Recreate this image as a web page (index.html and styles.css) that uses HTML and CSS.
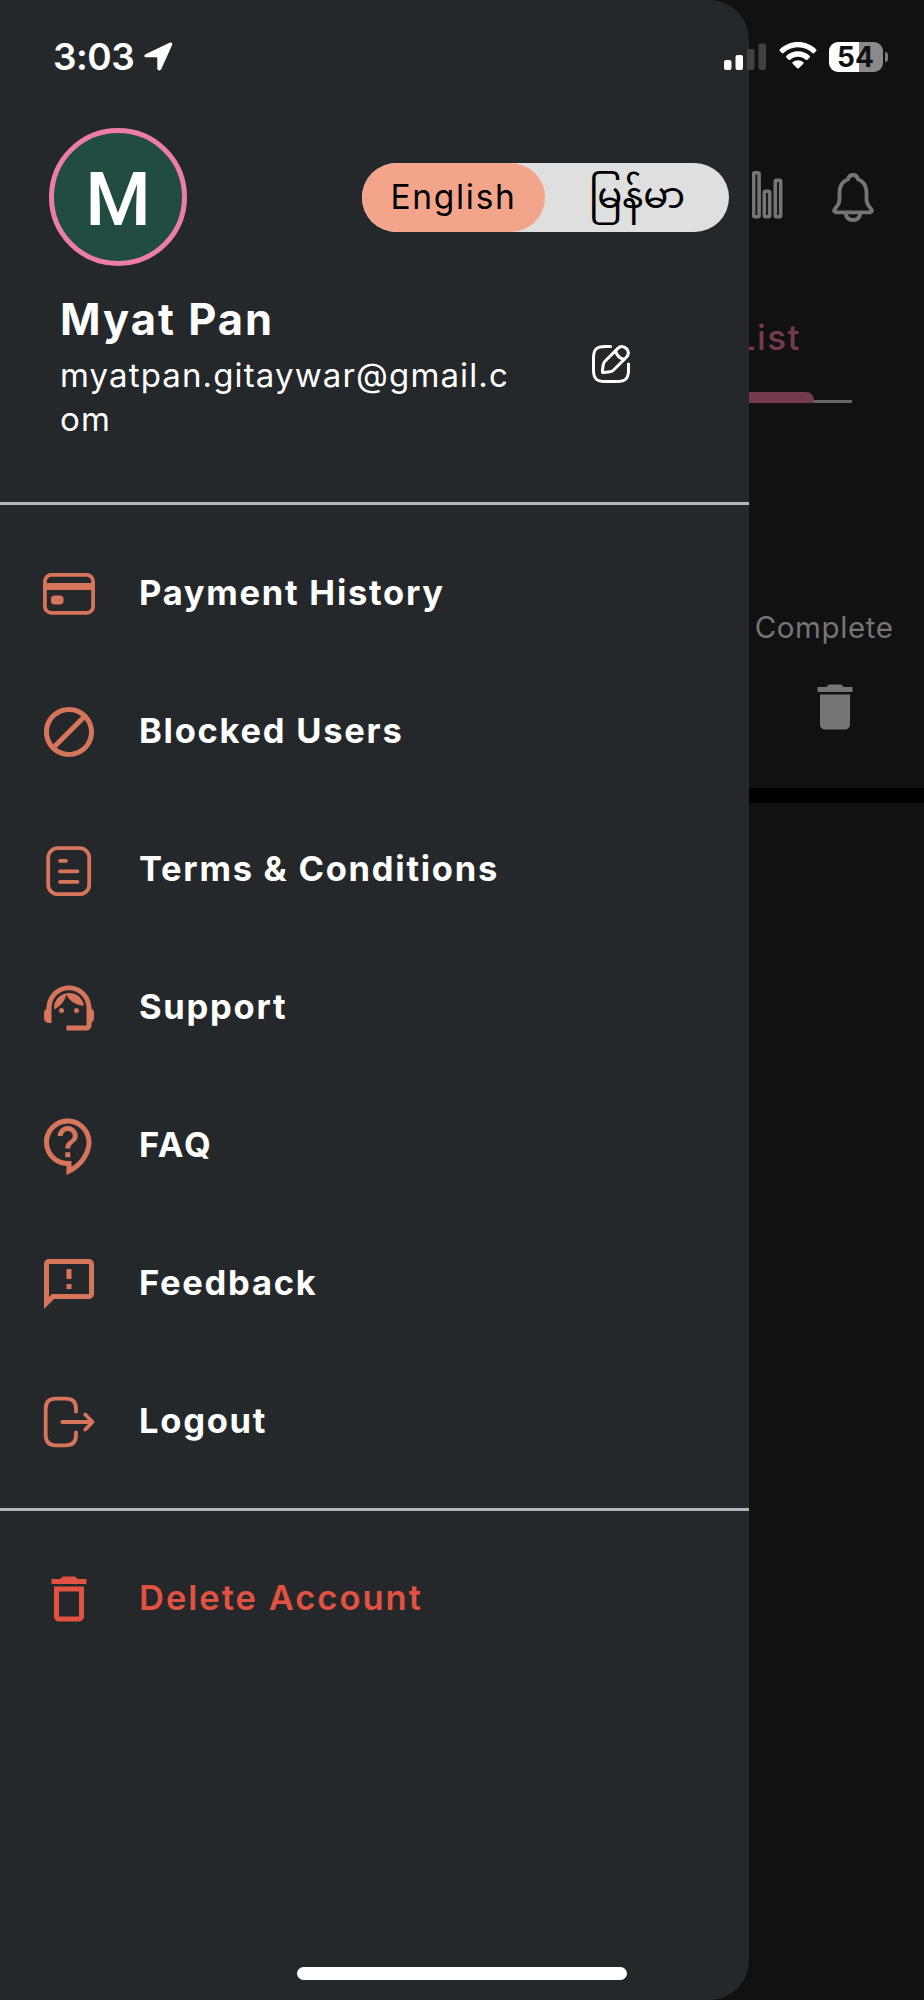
FILE: index.html
```html
<!DOCTYPE html>
<html lang="en">
<head>
<meta charset="utf-8">
<title>Account menu</title>
<link rel="stylesheet" href="styles.css">
</head>
<body>
<div class="phone">
  <main class="screen">
    <div class="toolbar">
      <svg class="bars" width="31" height="48" viewBox="0 0 31 48"><rect x="1.7" y="1.7" width="5.4" height="44" rx="1.2"/><rect x="12.3" y="20.2" width="5.4" height="25.5" rx="1.2"/><rect x="23.3" y="9.2" width="5.4" height="36.5" rx="1.2"/></svg>
      <svg class="bell" width="42" height="49" viewBox="0 0 42 49"><path d="M21 2c-2.8 0-4.400 1.500-5 4.200C10.500 8.500 7.500 13.500 7.500 19v7c0 3.500-1.200 6-3.300 8.300C2.300 36.500 1 38.500 3.500 39.300h35c2.500-.8 1.200-2.800-.7-5-2.100-2.300-3.300-4.800-3.300-8.300v-7c0-5.500-3-10.500-8.500-12.800C25.400 3.500 23.800 2 21 2z"/><path d="M13.500 39.500c.5 5 3.500 7.500 7.500 7.500s7-2.500 7.500-7.500"/></svg>
    </div>
    <div class="tabs"><span class="tab">List</span></div>
    <div class="tab-track"><div class="tab-mark"></div></div>
    <div class="entry">
      <span class="state">Complete</span>
      <svg class="bin" width="60" height="60" viewBox="0 0 24 24"><path d="M6 19c0 1.100.9 2 2 2h8c1.100 0 2-.9 2-2V7H6v12zM19 4h-3.500l-.55-.6c-.25-.27-.5-.4-.9-.4h-4.100c-.4 0-.65.13-.9.4L8.500 4H5v2h14V4z"/></svg>
    </div>
    <div class="band"></div>
  </main>

  <aside class="drawer">
    <header class="profile">
      <div class="top-row">
        <div class="avatar">M</div>
        <div class="lang"><span class="lang-on">English</span><span class="lang-off" lang="my">မြန်မာ</span></div>
      </div>
      <div class="identity">
        <div class="who">
          <h1 class="name">Myat Pan</h1>
          <p class="email">myatpan.gitaywar@gmail.c<br>om</p>
        </div>
        <svg class="edit" width="40" height="40" viewBox="0 0 40 40"><path d="M19.500 2.500H14C5.500 2.500 2.500 5.500 2.500 14v12c0 8.500 3 11.500 11.500 11.500h12c8.500 0 11.500-3 11.500-11.500v-6"/><path d="M26.800 4.400 14 17.200c-1 1-1.600 2.200-1.800 3.600l-.8 6.500c-.1 1 .3 1.400 1.300 1.300l6.300-.8c1.400-.2 2.600-.8 3.600-1.800L35.400 13.200c2.500-2.500 2.800-5.400 0-8.600-3-3-6-2.800-8.600-.2z"/><path d="M24.600 6.800c1 4.200 4.300 7.500 8.500 8.500"/></svg>
      </div>
    </header>

    <nav class="menu">
      <a class="item"><span class="icon"><svg width="52" height="42" viewBox="0 0 52 42"><rect class="line" x="1.900" y="1.900" width="48.200" height="38" rx="6.500"/><path d="M2 10h48v7H2z"/><rect x="8" y="22.500" width="12.500" height="9" rx="3.500"/></svg></span><span class="label">Payment History</span></a>
      <a class="item"><span class="icon"><svg width="60" height="60" viewBox="0 0 24 24"><path d="M12 2C6.480 2 2 6.480 2 12s4.480 10 10 10 10-4.480 10-10S17.520 2 12 2zM4 12c0-4.420 3.580-8 8-8 1.850 0 3.550.63 4.900 1.690L5.690 16.900C4.630 15.550 4 13.850 4 12zm8 8c-1.850 0-3.550-.63-4.900-1.690L18.310 7.100C19.370 8.450 20 10.150 20 12c0 4.420-3.580 8-8 8z"/></svg></span><span class="label">Blocked Users</span></a>
      <a class="item"><span class="icon"><svg class="terms" width="46" height="51" viewBox="0 0 46 51"><rect class="line" x="2.200" y="2.200" width="41" height="46" rx="9.500"/><path class="line" d="M14 14.800h6M14 25.300h17.500M14 35.800h17.500"/></svg></span><span class="label">Terms &amp; Conditions</span></a>
      <a class="item"><span class="icon"><svg width="60" height="60" viewBox="0 0 24 24"><path d="M21 12.220C21 6.730 16.740 3 12 3c-4.690 0-9 3.650-9 9.280-.6.340-1 .98-1 1.720v2c0 1.100.9 2 2 2h1v-6.100c0-3.870 3.130-7 7-7s7 3.130 7 7V19h-8v2h8c1.100 0 2-.9 2-2v-1.220c.59-.31 1-.92 1-1.640v-2.300c0-.7-.41-1.310-1-1.620z"/><circle cx="9" cy="13" r="1"/><circle cx="15" cy="13" r="1"/><path d="M18 11.030C17.520 8.180 15.040 6 12.050 6c-3.030 0-6.290 2.510-6.030 6.450 2.470-1.010 4.330-3.210 4.860-5.890 1.310 2.630 4 4.440 7.120 4.470z"/></svg></span><span class="label">Support</span></a>
      <a class="item"><span class="icon"><svg width="60" height="60" viewBox="0 0 24 24"><path d="M11 23.590v-3.600c-5.010-.26-9-4.420-9-9.490C2 5.260 6.260 1 11.500 1S21 5.260 21 10.500c0 4.950-3.440 9.930-8.570 12.400l-1.430.69zM11.500 3C7.360 3 4 6.360 4 10.500S7.360 18 11.500 18H13v2.300c3.640-2.300 6-6.080 6-9.800C19 6.360 15.640 3 11.500 3zm-1 11.500h2v2h-2zm2-1.500h-2c0-3.250 3-3 3-5 0-1.100-.9-2-2-2s-2 .9-2 2h-2c0-2.210 1.790-4 4-4s4 1.790 4 4c0 2.500-3 2.750-3 5z"/></svg></span><span class="label">FAQ</span></a>
      <a class="item"><span class="icon"><svg width="60" height="60" viewBox="0 0 24 24"><path d="M20 2H4c-1.100 0-2 .9-2 2v18l4-4h14c1.100 0 2-.9 2-2V4c0-1.100-.9-2-2-2zm0 14H5.170L4 17.170V4h16v12zM11 12h2v2h-2zm0-6h2v4h-2z"/></svg></span><span class="label">Feedback</span></a>
      <a class="item"><span class="icon"><svg width="52" height="52" viewBox="0 0 52 52"><path class="line" d="M33 15.500V13c0-7-3.500-10.300-10-10.300h-10.500C5.500 2.700 2.700 6.300 2.700 13v26c0 6.700 2.800 10.300 9.800 10.300H23c6.500 0 10-3.300 10-10.300v-2.500M19.300 26H49M42.300 18.500 49.500 26l-7.200 7.500"/></svg></span><span class="label">Logout</span></a>
    </nav>

    <a class="item danger"><span class="icon"><svg width="60" height="60" viewBox="0 0 24 24"><path d="M16 9v10H8V9h8zM18 7H6v12c0 1.100.9 2 2 2h8c1.100 0 2-.9 2-2V7zM19 4h-3.500l-.55-.6c-.25-.27-.5-.4-.9-.4h-4.100c-.4 0-.65.13-.9.4L8.500 4H5v2h14V4z" fill-rule="evenodd"/></svg></span><span class="label">Delete Account</span></a>
  </aside>

  <div class="status">
    <div class="clock"><span class="time">3:03</span><svg width="29" height="29" viewBox="0 0 29 29"><path d="M2 12 25.500.8c2-.9 3.300.5 2.500 2.400L17.300 27c-1 2.200-4 1.700-4-.8V16.200c0-.6-.3-.9-.9-.9H2.500C-.1 15.300-.5 13.100 2 12z"/></svg></div>
    <div class="signals">
      <svg class="cell" width="43" height="28" viewBox="0 0 43 28"><rect y="17" width="7.500" height="10" rx="2"/><rect x="11.500" y="12" width="7.500" height="15" rx="2"/><g fill="#404142"><rect x="23" y="6" width="7.500" height="21" rx="2"/><rect x="34.500" y=".5" width="7.500" height="26.500" rx="2"/></g></svg>
      <svg class="wifi" width="38" height="28" viewBox="0 0 38 28"><path d="M19 0c7 0 13.500 2.700 18 7.200.7.700.7 1.300.1 1.900l-1.900 1.900c-.6.600-1.200.5-1.800-.1C29.600 7.300 24.600 5.200 19 5.200S8.400 7.300 4.600 10.900c-.6.600-1.200.7-1.800.1L.9 9.100C.3 8.500.3 7.900 1 7.200 5.500 2.700 12 0 19 0z"/><path d="M19 9.200c4.500 0 8.500 1.700 11.500 4.500.7.600.7 1.200.1 1.800l-2.200 2.200c-.6.600-1.100.5-1.700 0-2.100-1.900-4.700-3-7.700-3s-5.600 1.100-7.700 3c-.6.500-1.100.6-1.700 0l-2.200-2.200c-.6-.6-.6-1.200.1-1.800 3-2.800 7-4.500 11.500-4.500z"/><path d="M19 18.200c2 0 3.900.8 5.200 1.900.6.500.6 1 .1 1.600l-4.300 4.300c-.7.700-1.300.7-2 0l-4.300-4.300c-.5-.6-.5-1.100.1-1.600 1.300-1.100 3.200-1.900 5.200-1.900z"/></svg>
      <div class="battery">54</div>
      <div class="nub"></div>
    </div>
  </div>
  <div class="home"></div>
</div>
</body>
</html>
```
FILE: styles.css
```css
* { box-sizing: border-box; }
body { margin: 0; background: #111; }
h1, p { margin: 0; }
svg { display: block; flex: none; }

.phone {
  position: relative;
  width: 924px;
  height: 2000px;
  overflow: hidden;
  background: #111;
  color: #fff;
  font-family: Inter, "Noto Sans Myanmar", Padauk, sans-serif;
}

/* screen behind the drawer */
.screen { display: flex; flex-direction: column; color: #757575; }
.toolbar {
  display: flex;
  justify-content: flex-end;
  align-items: flex-start;
  gap: 49px;
  height: 310px;
  padding: 171px 50.500px 0 0;
}
.bars { fill: none; stroke: #757575; stroke-width: 3.600; }
.bell { fill: none; stroke: #757575; stroke-width: 3.800; margin-top: 1.500px; }
.tabs { display: flex; justify-content: flex-end; height: 82px; padding-right: 123px; }
.tab { color: #733b50; font-size: 35px; font-weight: 500; line-height: 55px; letter-spacing: 1.500px; }
.tab-track {
  align-self: flex-end;
  width: 800px;
  height: 11px;
  margin-right: 72px;
  background: linear-gradient(#656567, #656567) bottom / 100% 3px no-repeat;
}
.tab-mark { width: 762px; height: 11px; border-radius: 0 8px 0 0; background: #733b50; }
.entry {
  display: flex;
  flex-direction: column;
  align-items: flex-end;
  height: 385px;
  padding-top: 204px;
}
.state { margin-right: 30.500px; font-size: 29.500px; line-height: 40px; letter-spacing: .6px; }
.bin { margin: 29.500px 59px 0 0; fill: #757575; }
.band { height: 15px; background: #000; }

/* drawer */
.drawer {
  position: absolute;
  top: 0;
  left: 0;
  width: 749px;
  height: 2000px;
  border-radius: 0 40px 40px 0;
  background: #25282b;
}
.profile { height: 505px; padding-top: 128px; border-bottom: 3px solid #b3b6ba; }
.top-row {
  display: flex;
  justify-content: space-between;
  align-items: center;
  padding: 0 20px 0 49px;
}
.avatar {
  width: 138px;
  height: 138px;
  border: 5px solid #ec7da8;
  border-radius: 50%;
  background: #204c41;
  font: 500 75px/133px Roboto, sans-serif;
  text-align: center;
}
.lang {
  display: flex;
  width: 367px;
  height: 69px;
  border-radius: 35px;
  background: #dfdfdf;
  color: #000;
  font-size: 33.500px;
  line-height: 68px;
  text-align: center;
}
.lang-on { width: 183px; border-radius: 35px; background: #f2a58a; letter-spacing: 1.700px; }
.lang-off { flex: 1; font-size: 37px; line-height: 63px; }
.identity { display: flex; align-items: center; padding: 26px 0 0 60px; }
.who { width: 531px; }
.name { font-size: 43.500px; font-weight: 700; line-height: 54px; letter-spacing: 2px; }
.email { margin-top: 6.500px; font-size: 33px; line-height: 44px; letter-spacing: 1.130px; }
.edit { margin-bottom: 4px; fill: none; stroke: #fff; stroke-width: 3; stroke-linecap: round; stroke-linejoin: round; }

.menu { display: flex; flex-direction: column; padding: 20px 0 17px; border-bottom: 3px solid #b3b6ba; }
.item { display: flex; align-items: center; height: 138px; padding-left: 39px; }
.icon { display: flex; justify-content: center; width: 60px; margin-right: 40px; fill: #d6755a; }
.line { fill: none; stroke: #d6755a; stroke-width: 3.800; stroke-linecap: round; stroke-linejoin: round; }
.terms { margin-top: 3px; }
.label { margin-top: -2px; font-size: 34.500px; font-weight: 700; line-height: 44px; letter-spacing: 1.740px; }
.danger { margin-top: 19px; color: #e25241; }
.danger .icon { fill: #e25241; }
.danger .label { font-weight: 600; letter-spacing: 2px; }

/* system overlays */
.status {
  position: absolute;
  top: 0;
  left: 0;
  display: flex;
  justify-content: space-between;
  width: 924px;
  padding: 42px 36px 0 53px;
}
.clock { display: flex; gap: 10px; fill: #fff; }
.time { font-size: 37px; font-weight: 600; line-height: 30px; letter-spacing: -.5px; }
.signals { display: flex; fill: #fff; }
.cell { margin: 1px 12px 0 0; }
.wifi { margin-right: 12px; }
.battery {
  width: 54px;
  height: 30px;
  padding-right: 1px;
  border-radius: 9px;
  background: linear-gradient(90deg, #fff 30px, #8a8a8a 30px);
  color: #111;
  font-size: 28px;
  font-weight: 700;
  line-height: 30px;
  text-align: center;
}
.nub { width: 3px; height: 10px; margin: 10px 0 0 2px; border-radius: 0 4px 4px 0; background: #7b7b7b; }
.home {
  position: absolute;
  left: 297px;
  bottom: 20px;
  width: 330px;
  height: 13px;
  border-radius: 7px;
  background: #fff;
}
```
